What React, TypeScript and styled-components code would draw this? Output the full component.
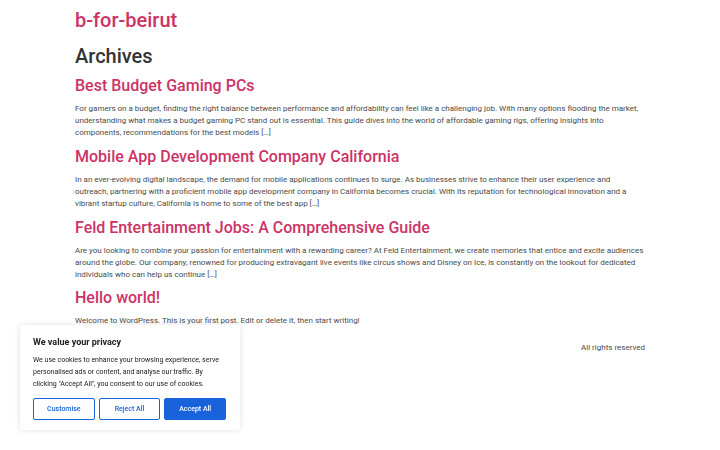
import React from "react";
import styled, { createGlobalStyle } from "styled-components";

const Global = createGlobalStyle`
  html, body { margin: 0; padding: 0; background: #fff; }
  body { font-family: Roboto, "Liberation Sans", sans-serif; color: #333; font-size: 8px; line-height: 12px; }
  * { box-sizing: border-box; }
`;

const Page = styled.div`
  width: 570px;
  margin: 0 auto;
`;

const Header = styled.header`
  padding: 8px 0 11px;
`;

const SiteTitle = styled.a`
  display: block;
  font-size: 20px;
  line-height: 25px;
  font-weight: 500;
  color: #cc3366;
  text-decoration: none;
`;

const PageTitle = styled.h1`
  margin: 0 0 7px;
  font-size: 20px;
  line-height: 25px;
  font-weight: 500;
  color: #333;
`;

const Article = styled.article`
  margin-bottom: 8px;
  &:nth-of-type(3) {
    margin-bottom: 7px;
  }
`;

const PostTitle = styled.h2`
  margin: 0 0 7px;
  font-size: 16px;
  line-height: 20px;
  font-weight: 500;
  color: #cc3366;
`;

const Excerpt = styled.p`
  margin: 0;
  font-size: 8px;
  line-height: 12px;
  color: #4a4a4a;
`;

const Footer = styled.footer`
  display: flex;
  justify-content: flex-end;
  padding: 7px 0;
  font-size: 8px;
  line-height: 12px;
  color: #4a4a4a;
`;

const Banner = styled.div`
  position: fixed;
  left: 20px;
  bottom: 20px;
  width: 220px;
  background: #fff;
  border-radius: 3px;
  box-shadow: 0 0 6px rgba(0, 0, 0, 0.12);
  padding: 11px 14px 10px 13px;
`;

const BannerTitle = styled.div`
  font-size: 9px;
  line-height: 12px;
  font-weight: 700;
  color: #212121;
  margin-bottom: 6px;
`;

const BannerText = styled.p`
  margin: 0 0 8px;
  font-size: 7px;
  line-height: 12px;
  color: #212121;
`;

const Buttons = styled.div`
  display: flex;
  gap: 4px;
`;

const Btn = styled.button<{ $primary?: boolean }>`
  flex: 1;
  height: 22px;
  border: 1px solid #1863dc;
  border-radius: 2px;
  background: ${(p) => (p.$primary ? "#1863dc" : "#fff")};
  color: ${(p) => (p.$primary ? "#fff" : "#1863dc")};
  font-family: Roboto, "Liberation Sans", sans-serif;
  font-size: 7px;
  font-weight: 500;
  padding: 0;
`;

const posts = [
  {
    title: "Best Budget Gaming PCs",
    text:
      "For gamers on a budget, finding the right balance between performance and affordability can feel like a challenging job. With many options flooding the market, understanding what makes a budget gaming PC stand out is essential. This guide dives into the world of affordable gaming rigs, offering insights into components, recommendations for the best models […]",
  },
  {
    title: "Mobile App Development Company California",
    text:
      "In an ever-evolving digital landscape, the demand for mobile applications continues to surge. As businesses strive to enhance their user experience and outreach, partnering with a proficient mobile app development company in California becomes crucial. With its reputation for technological innovation and a vibrant startup culture, California is home to some of the best app […]",
  },
  {
    title: "Feld Entertainment Jobs: A Comprehensive Guide",
    text:
      "Are you looking to combine your passion for entertainment with a rewarding career? At Feld Entertainment, we create memories that entice and excite audiences around the globe. Our company, renowned for producing extravagant live events like circus shows and Disney on Ice, is constantly on the lookout for dedicated individuals who can help us continue […]",
  },
  {
    title: "Hello world!",
    text: "Welcome to WordPress. This is your first post. Edit or delete it, then start writing!",
  },
];

export default function App() {
  return (
    <>
      <Global />
      <Page>
        <Header>
          <SiteTitle href="#">b-for-beirut</SiteTitle>
        </Header>
        <main>
          <PageTitle>Archives</PageTitle>
          {posts.map((p) => (
            <Article key={p.title}>
              <PostTitle>{p.title}</PostTitle>
              <Excerpt>{p.text}</Excerpt>
            </Article>
          ))}
        </main>
        <Footer>All rights reserved</Footer>
      </Page>
      <Banner>
        <BannerTitle>We value your privacy</BannerTitle>
        <BannerText>
          We use cookies to enhance your browsing experience, serve personalised ads or content, and analyse our traffic. By clicking "Accept All", you consent to our use of cookies.
        </BannerText>
        <Buttons>
          <Btn>Customise</Btn>
          <Btn>Reject All</Btn>
          <Btn $primary>Accept All</Btn>
        </Buttons>
      </Banner>
    </>
  );
}
